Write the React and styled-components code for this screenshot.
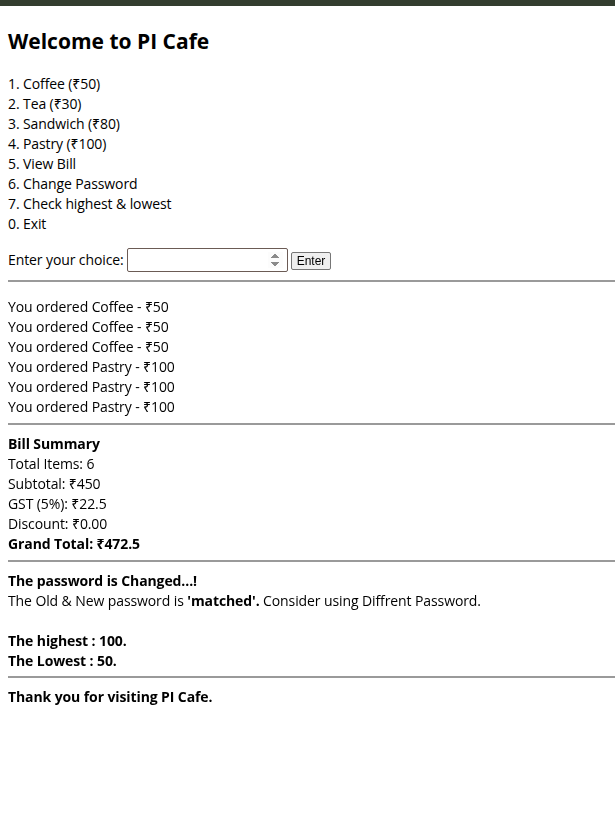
import React from "react";
import styled, { createGlobalStyle } from "styled-components";

const GlobalStyle = createGlobalStyle`
  body {
    margin: 0;
    background: #ffffff;
    font-family: "Open Sans", "Noto Sans", sans-serif;
    color: #000;
  }
`;

const TopBar = styled.div`
  height: 6px;
  background: #333d2f;
`;

const Page = styled.div`
  padding: 0 0 40px 8px;
  font-size: 14px;
  line-height: 20px;
  letter-spacing: -0.1px;
`;

const Title = styled.h2`
  margin: 22px 0 20px;
  font-size: 21px;
  line-height: 26px;
  font-weight: 700;
  letter-spacing: 0;
`;

const Lines = styled.div`
  display: flex;
  flex-direction: column;
`;

const Line = styled.div`
  font-weight: ${(p) => (p.$bold ? 700 : 400)};
`;

const ChoiceRow = styled.div`
  display: flex;
  align-items: center;
  margin-top: 13px;
  height: 26px;
`;

const ChoiceLabel = styled.label`
  margin-right: 3px;
`;

const NumberInput = styled.input`
  width: 161px;
  height: 24px;
  box-sizing: border-box;
  border: 1px solid #6b5b55;
  border-radius: 2px;
  font-size: 14px;
  padding: 0 4px;
  margin-right: 3px;
  outline: none;
`;

const Button = styled.button`
  font-family: "Liberation Sans", Arial, sans-serif;
  font-size: 12px;
  height: 18px;
  padding: 0 5px;
  border: 1px solid #767676;
  background: #efefef;
  border-radius: 2px;
  line-height: 14px;
  margin-top: 2px;
`;

const Rule = styled.hr`
  border: none;
  border-top: 2px solid #9a9a9a;
  height: 0;
  margin: ${(p) => p.$m || "6px 0 9px"};
`;

const Gap = styled.div`
  height: 20px;
`;

const menu = [
  "1. Coffee (₹50)",
  "2. Tea (₹30)",
  "3. Sandwich (₹80)",
  "4. Pastry (₹100)",
  "5. View Bill",
  "6. Change Password",
  "7. Check highest & lowest",
  "0. Exit",
];

const orders = [
  "You ordered Coffee - ₹50",
  "You ordered Coffee - ₹50",
  "You ordered Coffee - ₹50",
  "You ordered Pastry - ₹100",
  "You ordered Pastry - ₹100",
  "You ordered Pastry - ₹100",
];

export default function App() {
  return (
    <>
      <GlobalStyle />
      <TopBar />
      <Page>
        <Title>Welcome to PI Cafe</Title>
        <Lines>
          {menu.map((m) => (
            <Line key={m}>{m}</Line>
          ))}
        </Lines>
        <ChoiceRow>
          <ChoiceLabel>Enter your choice:</ChoiceLabel>
          <NumberInput type="number" autoFocus />
          <Button>Enter</Button>
        </ChoiceRow>
        <Rule $m="7px 0 15px" />
        <Lines>
          {orders.map((o, i) => (
            <Line key={i}>{o}</Line>
          ))}
        </Lines>
        <Rule />
        <Lines>
          <Line $bold>Bill Summary</Line>
          <Line>Total Items: 6</Line>
          <Line>Subtotal: ₹450</Line>
          <Line>GST (5%): ₹22.5</Line>
          <Line>Discount: ₹0.00</Line>
          <Line $bold>Grand Total: ₹472.5</Line>
        </Lines>
        <Rule />
        <Lines>
          <Line $bold>The password is Changed...!</Line>
          <Line>
            The Old &amp; New password is <b>'matched'.</b> Consider using
            Diffrent Password.
          </Line>
          <Gap />
          <Line $bold>The highest : 100.</Line>
          <Line $bold>The Lowest : 50.</Line>
        </Lines>
        <Rule $m="5px 0 9px" />
        <Line $bold>Thank you for visiting PI Cafe.</Line>
      </Page>
    </>
  );
}
